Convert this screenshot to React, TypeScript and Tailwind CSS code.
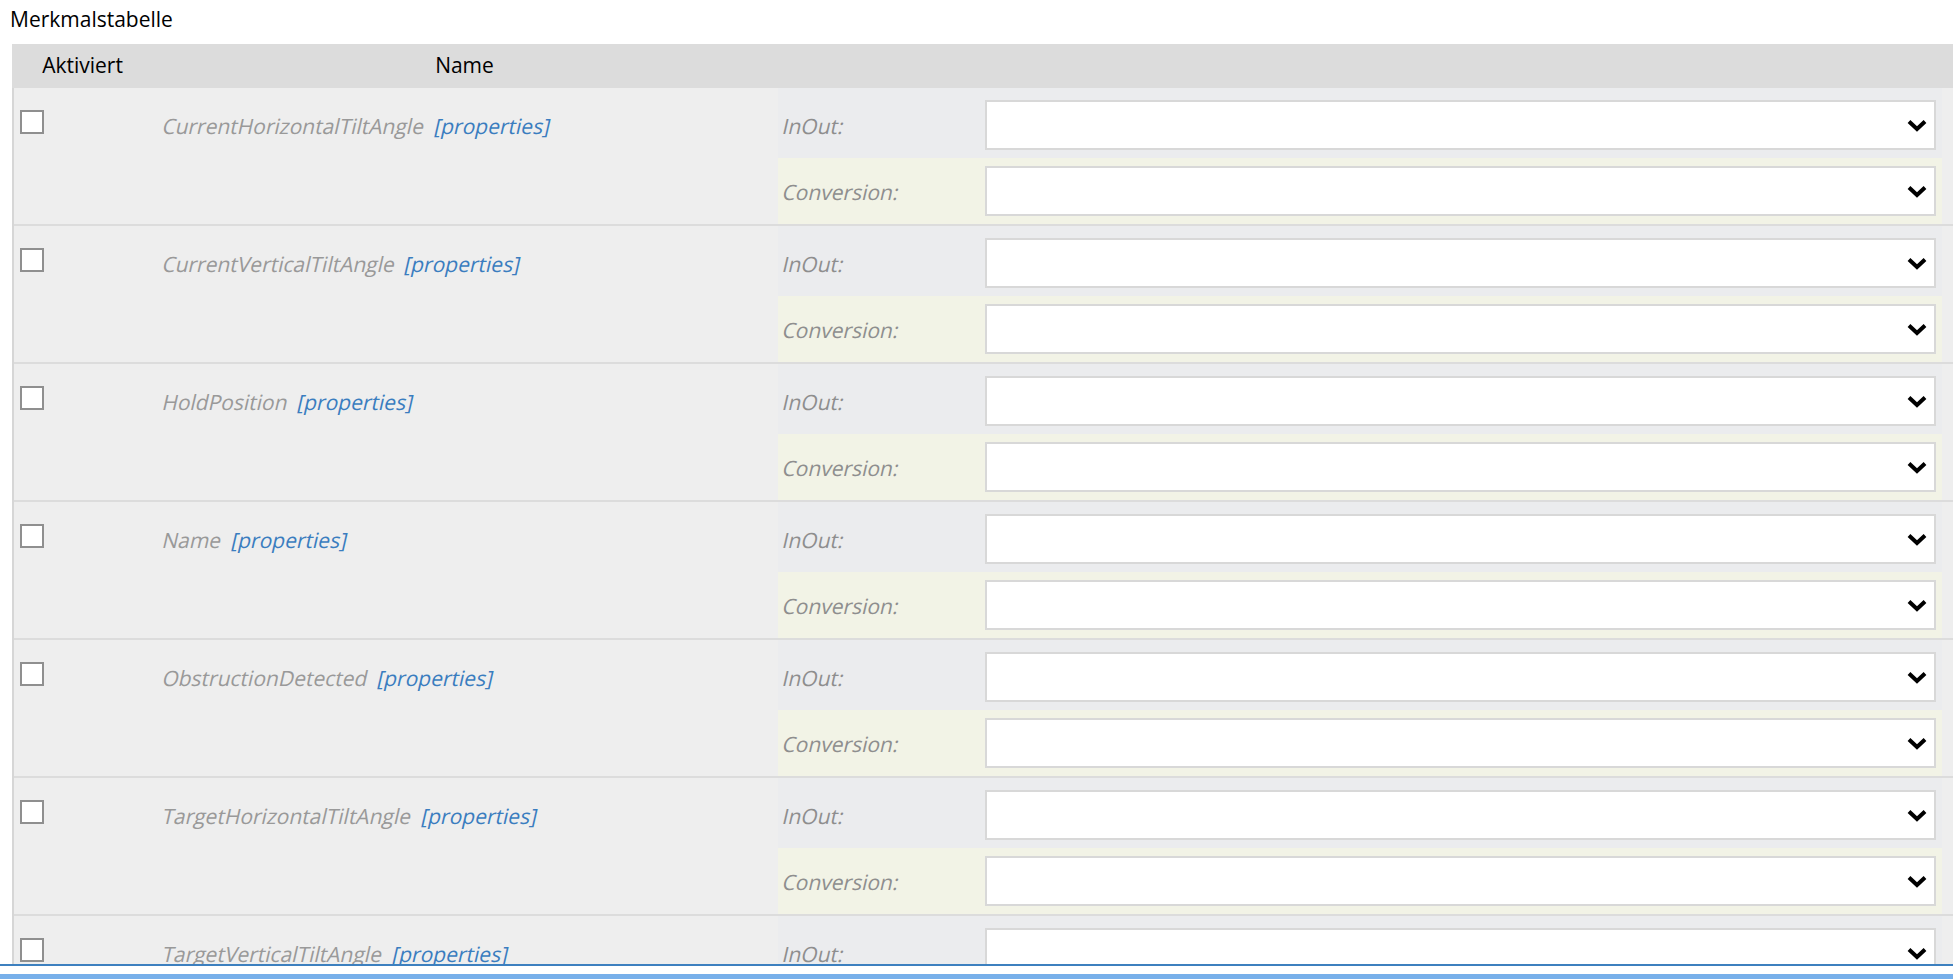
import React from 'react';

const FEATURES = [
  'CurrentHorizontalTiltAngle',
  'CurrentVerticalTiltAngle',
  'HoldPosition',
  'Name',
  'ObstructionDetected',
  'TargetHorizontalTiltAngle',
  'TargetVerticalTiltAngle',
];

// the page uses a synthetic oblique of the regular face, wider than the real italic
const Oblique: React.FC<{ className?: string; children: React.ReactNode }> = ({ className = '', children }) => (
  <span className={`inline-block skew-x-[-13deg] ${className}`}>{children}</span>
);

const Chevron: React.FC = () => (
  <svg width="20" height="13" viewBox="0 0 20 13" className="shrink-0">
    <polyline points="2,2.5 10,10 18,2.5" fill="none" stroke="#000" strokeWidth="4" strokeLinejoin="miter" />
  </svg>
);

const SelectBox: React.FC = () => (
  <div className="flex-1 h-[50px] bg-white border-2 border-[#d8d8d8] flex items-center justify-end pr-[7px] mr-[6px]">
    <Chevron />
  </div>
);

const FeatureRow: React.FC<{ name: string }> = ({ name }) => (
  <div className="flex border-b-2 border-[#dcdcdc] bg-[#eeeeee]">
    {/* checkbox column */}
    <div className="w-[141px] shrink-0 pl-[6px] pt-[22px]">
      <div className="w-[24px] h-[24px] bg-white border-2 border-[#8f8f8f]" />
    </div>

    {/* name column */}
    <div className="w-[623px] shrink-0 pl-[8px] pt-[23px] leading-[30px] text-[21px] flex gap-[10px] items-start">
      <Oblique className="text-[#999999]">{name}</Oblique>
      <Oblique className="text-[#3a7dbf]">[properties]</Oblique>
    </div>

    {/* mapping column */}
    <div className="flex-1 pr-[11px]">
      <div className="flex items-center h-[70px] pt-[4px] bg-[#ebecee]">
        <div className="w-[207px] shrink-0 pl-[5px] pt-[3px] text-[21px] text-[#8e8e8e]">
          <Oblique>InOut:</Oblique>
        </div>
        <SelectBox />
      </div>
      <div className="flex items-center h-[66px] bg-[#f2f3e6]">
        <div className="w-[207px] shrink-0 pl-[5px] pt-[3px] text-[21px] text-[#8e8e8e]">
          <Oblique>Conversion:</Oblique>
        </div>
        <SelectBox />
      </div>
    </div>
  </div>
);

export default function App() {
  return (
    <div
      className="w-[1953px] h-[979px] flex flex-col overflow-hidden bg-white"
      style={{ fontFamily: '"Open Sans", "Noto Sans", sans-serif' }}
    >
      <div className="h-[964px] overflow-hidden">
        <div className="h-[44px] pl-[10px] pt-[4px] text-[21px] leading-[30px] text-black">Merkmalstabelle</div>

        <div className="ml-[12px]">
          {/* header */}
          <div className="flex h-[44px] bg-[#dcdcdc] items-center text-[21px] text-black">
            <div className="w-[141px] shrink-0 text-center">Aktiviert</div>
            <div className="w-[623px] shrink-0 text-center">Name</div>
            <div className="flex-1" />
          </div>

          <div className="border-l-2 border-[#d6d6d6]">
            {FEATURES.map((f) => (
              <FeatureRow key={f} name={f} />
            ))}
          </div>
        </div>
      </div>

      {/* bottom bar */}
      <div className="border-t-2 border-[#3d80bf] h-[15px] flex flex-col">
        <div className="h-[8px] bg-white" />
        <div className="flex-1 bg-[#78b0ea]" />
      </div>
    </div>
  );
}
